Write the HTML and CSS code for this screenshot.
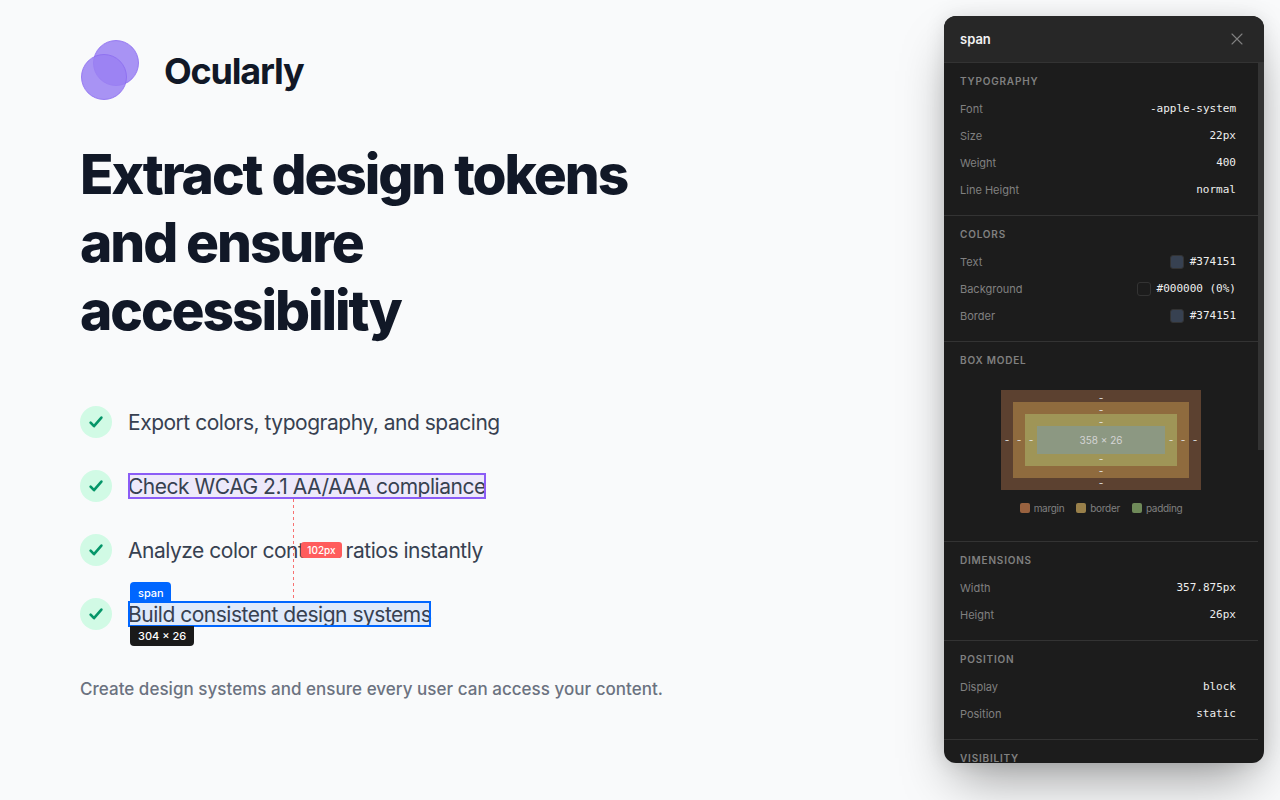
FILE: index.html
```html
<!DOCTYPE html>
<html lang="en">
<head>
    <meta charset="UTF-8">
    <title>Ocularly</title>
    <link rel="stylesheet" href="styles.css">
</head>
<body>
    <main class="hero">
        <div class="brand">
            <svg class="brand-logo" width="60" height="60" viewBox="0 0 60 60">
                <circle cx="36" cy="23" r="22.5" fill="#9a80f2" fill-opacity="0.85" stroke="#8b6cf0" stroke-opacity="0.8"/>
                <circle cx="24" cy="37" r="22.5" fill="#9a80f2" fill-opacity="0.85" stroke="#8b6cf0" stroke-opacity="0.8"/>
            </svg>
            <span class="brand-name">Ocularly</span>
        </div>
        <h1>Extract design tokens and ensure accessibility</h1>
        <ul class="features">
            <li>
                <span class="check"><svg width="16" height="16" viewBox="0 0 16 16"><path d="M2.6 8.6l3.4 3.6 7.4-8.6" fill="none" stroke="#059669" stroke-width="2.6" stroke-linecap="round" stroke-linejoin="round"/></svg></span>
                <span class="feature-text">Export colors, typography, and spacing</span>
            </li>
            <li>
                <span class="check"><svg width="16" height="16" viewBox="0 0 16 16"><path d="M2.6 8.6l3.4 3.6 7.4-8.6" fill="none" stroke="#059669" stroke-width="2.6" stroke-linecap="round" stroke-linejoin="round"/></svg></span>
                <span class="feature-text hl-purple">Check WCAG 2.1 AA/AAA compliance</span>
            </li>
            <li>
                <span class="check"><svg width="16" height="16" viewBox="0 0 16 16"><path d="M2.6 8.6l3.4 3.6 7.4-8.6" fill="none" stroke="#059669" stroke-width="2.6" stroke-linecap="round" stroke-linejoin="round"/></svg></span>
                <span class="feature-text">Analyze color contrast ratios instantly</span>
                <span class="measure-line"></span>
                <span class="measure-badge">102px</span>
            </li>
            <li>
                <span class="check"><svg width="16" height="16" viewBox="0 0 16 16"><path d="M2.6 8.6l3.4 3.6 7.4-8.6" fill="none" stroke="#059669" stroke-width="2.6" stroke-linecap="round" stroke-linejoin="round"/></svg></span>
                <span class="feature-text hl-blue">Build consistent design systems
                    <span class="tag-name">span</span>
                    <span class="tag-size">304 × 26</span>
                </span>
            </li>
        </ul>
        <p class="tagline">Create design systems and ensure every user can access your content.</p>
    </main>

    <aside class="panel">
        <header class="panel-head">
            <span class="panel-title">span</span>
            <svg class="panel-close" width="14" height="14" viewBox="0 0 14 14"><path d="M2 2l10 10M12 2L2 12" stroke="#808080" stroke-width="1.1" stroke-linecap="round"/></svg>
        </header>
        <div class="panel-body">
            <section class="group">
                <h2>Typography</h2>
                <div class="row"><span>Font</span><code>-apple-system</code></div>
                <div class="row"><span>Size</span><code>22px</code></div>
                <div class="row"><span>Weight</span><code>400</code></div>
                <div class="row"><span>Line Height</span><code>normal</code></div>
            </section>
            <section class="group">
                <h2>Colors</h2>
                <div class="row"><span>Text</span><code><i class="swatch swatch-slate"></i>#374151</code></div>
                <div class="row"><span>Background</span><code><i class="swatch"></i>#000000 (0%)</code></div>
                <div class="row"><span>Border</span><code><i class="swatch swatch-slate"></i>#374151</code></div>
            </section>
            <section class="group group-box">
                <h2>Box Model</h2>
                <div class="box box-margin">
                    <b>-</b>
                    <div class="box-mid"><b>-</b>
                        <div class="box box-border">
                            <b>-</b>
                            <div class="box-mid"><b>-</b>
                                <div class="box box-padding">
                                    <b>-</b>
                                    <div class="box-mid"><b>-</b>
                                        <div class="box-content">358 × 26</div>
                                    <b>-</b></div>
                                    <b>-</b>
                                </div>
                            <b>-</b></div>
                            <b>-</b>
                        </div>
                    <b>-</b></div>
                    <b>-</b>
                </div>
                <div class="legend">
                    <span><i class="key key-margin"></i>margin</span>
                    <span><i class="key key-border"></i>border</span>
                    <span><i class="key key-padding"></i>padding</span>
                </div>
            </section>
            <section class="group">
                <h2>Dimensions</h2>
                <div class="row"><span>Width</span><code>357.875px</code></div>
                <div class="row"><span>Height</span><code>26px</code></div>
            </section>
            <section class="group">
                <h2>Position</h2>
                <div class="row"><span>Display</span><code>block</code></div>
                <div class="row"><span>Position</span><code>static</code></div>
            </section>
            <section class="group">
                <h2>Visibility</h2>
            </section>
        </div>
        <span class="scroll-thumb"></span>
    </aside>
</body>
</html>
```

FILE: styles.css
```css
* {
    box-sizing: border-box;
}
html, body {
    height: 100%;
}
body {
    margin: 0;
    background-color: #f9fafb;
    font-family: Inter, "Noto Sans", sans-serif;
    color: #111827;
    overflow: hidden;
}
.hero {
    width: 640px;
    margin-left: 80px;
    padding-top: 40px;
}
.brand {
    display: flex;
    align-items: center;
    gap: 24px;
    height: 60px;
}
.brand-logo {
    display: block;
}
.brand-name {
    margin-top: 2px;
    font-size: 36px;
    font-weight: 700;
    letter-spacing: -1.2px;
}
h1 {
    margin: 40px 0 62px;
    width: 600px;
    font-size: 55px;
    line-height: 68px;
    font-weight: 800;
    letter-spacing: -2.08px;
}
.features {
    list-style: none;
    margin: 0;
    padding: 0;
    display: flex;
    flex-direction: column;
    gap: 32px;
}
.features li {
    position: relative;
    display: flex;
    align-items: center;
    gap: 16px;
    height: 32px;
    font-size: 21px;
    letter-spacing: -0.48px;
    color: #374151;
}
.check {
    width: 32px;
    height: 32px;
    border-radius: 50%;
    background-color: #d1fae5;
    display: flex;
    align-items: center;
    justify-content: center;
}
.feature-text {
    position: relative;
    height: 26px;
    line-height: 28px;
}
.hl-purple {
    outline: 2px solid #8b5cf6;
    outline-offset: -2px;
    background-color: rgba(139, 92, 246, 0.1);
}
.hl-blue {
    outline: 2px solid #0066ff;
    outline-offset: -2px;
    background-color: rgba(0, 102, 255, 0.1);
}
.tag-name, .tag-size {
    position: absolute;
    left: 2px;
    height: 20px;
    font-size: 11px;
    font-weight: 500;
    line-height: 13px;
    letter-spacing: 0;
    color: #fff;
    padding: 4px 8px 3px;
    white-space: nowrap;
}
.tag-name {
    bottom: 25px;
    width: 41px;
    padding-top: 5px;
    text-align: center;
    background-color: #0066ff;
    border-radius: 4px 4px 0 0;
}
.tag-size {
    top: 25px;
    background-color: #1a1a1a;
    border-radius: 0 0 4px 4px;
}
.measure-line {
    position: absolute;
    left: 213px;
    top: -35px;
    width: 1px;
    height: 102px;
    background-image: repeating-linear-gradient(to bottom, #f87171 0, #f87171 3px, transparent 3px, transparent 6px);
}
.measure-badge {
    position: absolute;
    left: 221px;
    top: 8px;
    width: 41px;
    height: 16px;
    border-radius: 3px;
    background-color: #ff5c5c;
    color: #fff;
    font-size: 10px;
    font-weight: 500;
    letter-spacing: 0;
    line-height: 16px;
    text-align: center;
}
.tagline {
    margin: 46px 0 0;
    font-size: 17px;
    line-height: 27px;
    font-weight: 500;
    letter-spacing: 0.03px;
    color: #6b7280;
}
.panel {
    position: absolute;
    left: 944px;
    top: 16px;
    width: 320px;
    height: 747px;
    background-color: #1c1c1c;
    border-radius: 12px;
    overflow: hidden;
    box-shadow: 0 25px 50px -12px rgba(0, 0, 0, 0.4), 0 0 20px rgba(0, 0, 0, 0.1);
    font-size: 11px;
}
.panel-head {
    height: 47px;
    padding: 0 20px 0 16px;
    display: flex;
    align-items: center;
    justify-content: space-between;
    background-color: #272727;
    border-bottom: 1px solid #333;
}
.panel-title {
    color: #f2f2f2;
    font-size: 13px;
    font-weight: 600;
}
.panel-body {
    width: 314px;
}
.group {
    padding: 12px 22px 13px 16px;
    border-bottom: 1px solid #333;
    height: 153px;
}
.group:nth-child(2) {
    height: 126px;
}
.group-box {
    height: 200px;
    padding-right: 16px;
}
.group:nth-child(4), .group:nth-child(5) {
    height: 99px;
}
.group h2 {
    margin: 0 0 7px;
    height: 13px;
    font-size: 10px;
    line-height: 13px;
    font-weight: 600;
    letter-spacing: 0.8px;
    text-transform: uppercase;
    color: #808080;
}
.row {
    display: flex;
    align-items: center;
    justify-content: space-between;
    height: 27px;
    color: #808080;
}
.row code {
    display: flex;
    align-items: center;
    gap: 6px;
    font-family: "DejaVu Sans Mono", monospace;
    font-size: 11px;
    color: #eee;
}
.swatch {
    width: 14px;
    height: 14px;
    border-radius: 3px;
    border: 1px solid #333;
}
.swatch-slate {
    background-color: #374151;
}
.box {
    display: flex;
    flex-direction: column;
    justify-content: space-between;
    align-items: stretch;
    flex: 1;
    text-align: center;
}
.box b {
    display: block;
    height: 12px;
    width: 12px;
    font-size: 10px;
    font-weight: 400;
    line-height: 12px;
    text-align: center;
    color: #e5e5e5;
    align-self: center;
}
.box > b:first-child {
    line-height: 16px;
}
.box > b:last-child {
    line-height: 10px;
}
.box-mid {
    flex: 1;
    display: flex;
    align-items: center;
}
.box-margin {
    width: 200px;
    height: 100px;
    margin: 23px auto 0;
    background-color: #5c4130;
    flex: none;
}
.box-border {
    height: 76px;
    background-color: #8f6b3e;
}
.box-padding {
    height: 52px;
    background-color: #9f9557;
}
.box-content {
    flex: 1;
    height: 28px;
    background-color: #8c9882;
    color: #d4d4d4;
    line-height: 28px;
    text-align: center;
    font-size: 10px;
}
.legend {
    display: flex;
    justify-content: center;
    gap: 12px;
    margin-top: 12px;
    font-size: 10px;
    letter-spacing: -0.3px;
    line-height: 12px;
    color: #808080;
}
.legend span {
    display: flex;
    align-items: center;
    gap: 4px;
}
.key {
    width: 10px;
    height: 10px;
    border-radius: 2px;
}
.key-margin {
    background-color: #99623f;
}
.key-border {
    background-color: #99804a;
}
.key-padding {
    background-color: #6f8a59;
}
.scroll-thumb {
    position: absolute;
    right: 0;
    top: 47px;
    width: 6px;
    height: 387px;
    background-color: #333;
}
```
